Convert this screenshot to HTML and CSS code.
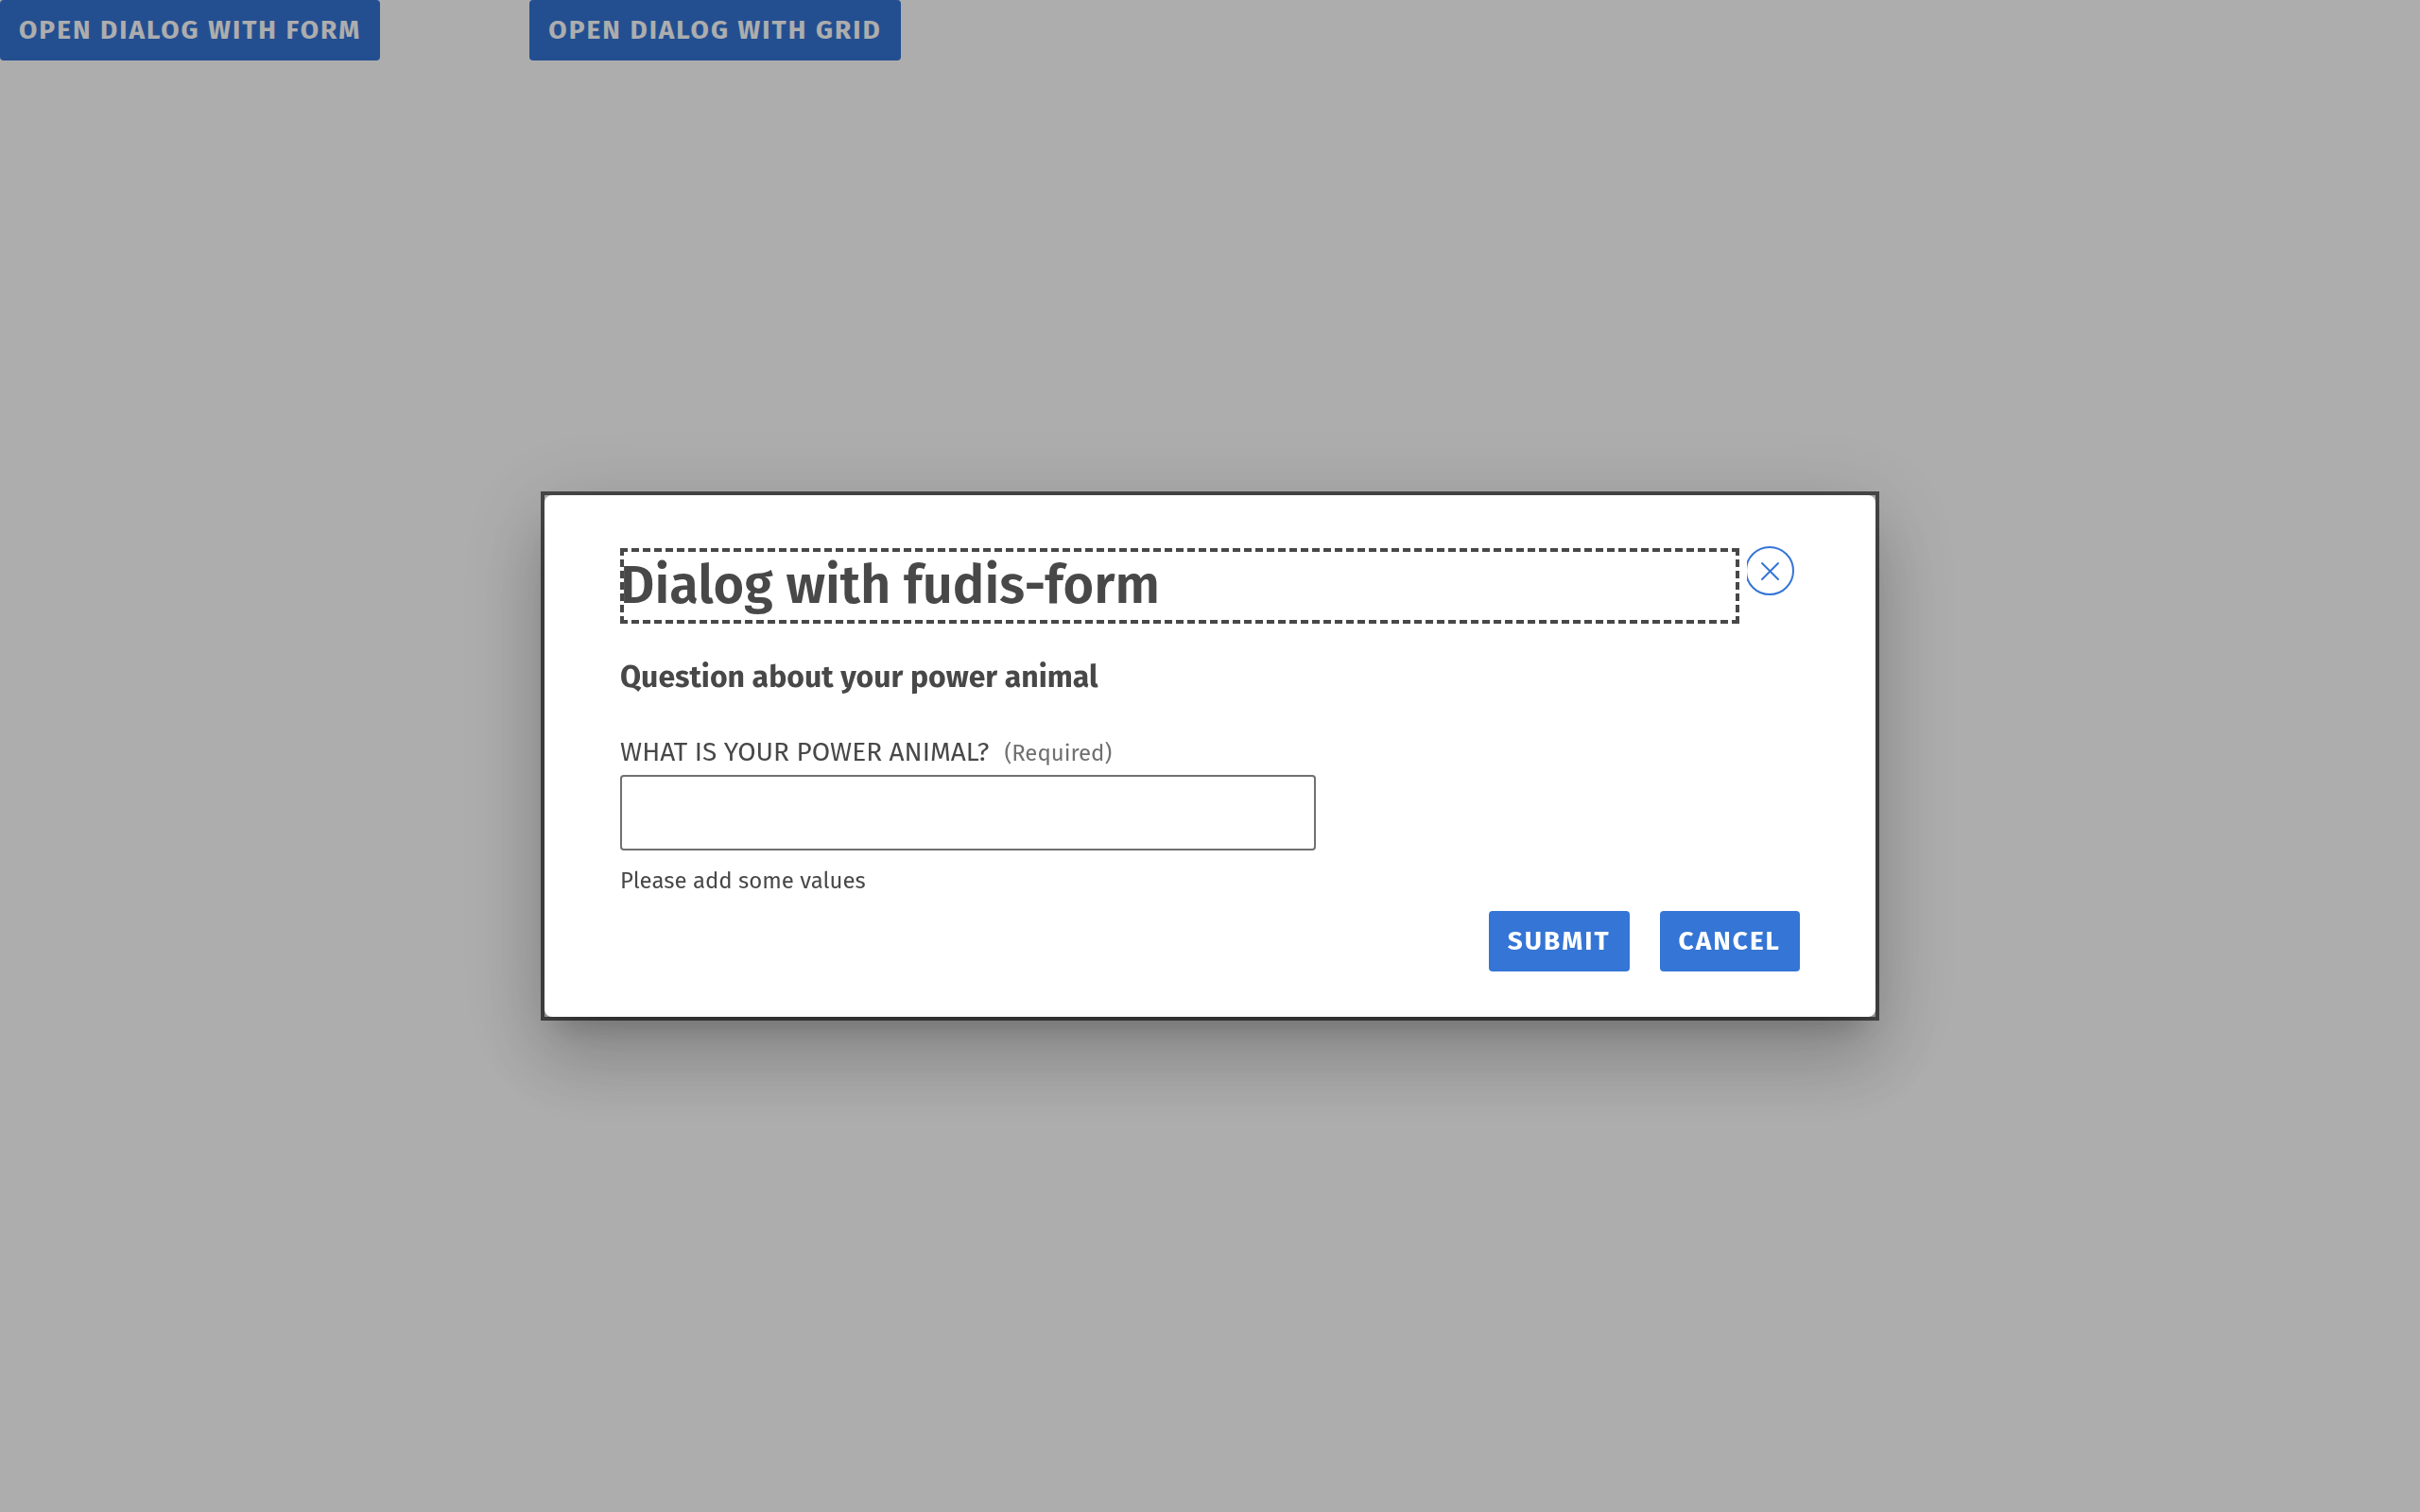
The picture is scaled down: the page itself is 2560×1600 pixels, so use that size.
FILE: index.html
```html
<!DOCTYPE html>
<html lang="en">
<head>
<meta charset="utf-8">
<meta name="viewport" content="width=device-width, initial-scale=1">
<title>Dialog</title>
<link rel="stylesheet" href="styles.css">
</head>
<body>
<main class="page">
  <button class="button" type="button">Open dialog with form</button>
  <button class="button" type="button">Open dialog with grid</button>
</main>
<div class="overlay">
  <div class="dialog-frame" role="dialog" aria-modal="true" aria-labelledby="dialog-title">
    <div class="dialog">
      <header class="dialog-header">
        <h1 class="dialog-title" id="dialog-title" tabindex="-1">Dialog with fudis-form</h1>
        <button class="close" type="button" aria-label="Close">
          <svg class="close-icon" viewBox="0 0 56 56" aria-hidden="true">
            <circle cx="24" cy="28" r="25"/>
            <path d="M16 20l17 17M33 20L16 37"/>
          </svg>
        </button>
      </header>
      <form class="form">
        <h2 class="form-title">Question about your power animal</h2>
        <div class="field">
          <label class="label" for="animal">WHAT IS YOUR POWER ANIMAL?<span class="required">(Required)</span></label>
          <input class="input" id="animal" type="text" required aria-describedby="animal-help">
          <p class="help" id="animal-help">Please add some values</p>
        </div>
        <div class="actions">
          <button class="button" type="submit">Submit</button>
          <button class="button" type="button">Cancel</button>
        </div>
      </form>
    </div>
  </div>
</div>
</body>
</html>
```
FILE: styles.css
```css
* {
  box-sizing: border-box;
}

body {
  margin: 0;
  background: #fff;
  color: #484848;
  font-family: "Fira Sans", "Noto Sans", sans-serif;
}

h1, h2, p {
  margin: 0;
}

.page {
  display: flex;
  gap: 158px;
}

.button {
  padding: 12px 20px;
  border: 0;
  border-radius: 4px;
  background: #3475d6;
  color: #fff;
  font: inherit;
  font-size: 28px;
  font-weight: 700;
  line-height: 40px;
  letter-spacing: 2px;
  text-transform: uppercase;
  white-space: nowrap;
}

.overlay {
  position: fixed;
  inset: 0;
  display: flex;
  align-items: center;
  justify-content: center;
  background: rgba(0, 0, 0, 0.32);
}

.dialog-frame {
  width: 100%;
  max-width: 1416px;
  border: 4px solid #484848;
}

.dialog {
  padding: 52px 80px 48px;
  border-radius: 8px;
  background: #fff;
  box-shadow:
    0 22px 30px -14px rgba(0, 0, 0, 0.2),
    0 48px 76px 6px rgba(0, 0, 0, 0.14),
    0 18px 92px 16px rgba(0, 0, 0, 0.12);
}

.dialog-header {
  display: flex;
  align-items: flex-start;
  gap: 8px;
}

.dialog-title {
  flex: 1;
  margin-top: 4px;
  outline: 4px dashed #484848;
  outline-offset: -4px;
  font-size: 56px;
  font-weight: 600;
  line-height: 80px;
}

.close {
  width: 56px;
  height: 56px;
  padding: 0;
  border: 0;
  background: none;
}

.close-icon {
  display: block;
  overflow: hidden;
  fill: none;
  stroke: #3475d6;
  stroke-width: 2;
  stroke-linecap: round;
}

.form {
  padding-top: 36px;
}

.form-title {
  font-size: 32px;
  font-weight: 700;
  line-height: 40px;
}

.field {
  padding-top: 40px;
}

.label {
  display: flex;
  align-items: baseline;
  gap: 16px;
  font-size: 28px;
  line-height: 40px;
}

.required {
  color: #707070;
  font-size: 24px;
  line-height: 32px;
}

.input {
  display: block;
  width: 100%;
  max-width: 736px;
  height: 80px;
  margin-top: 4px;
  padding: 0 16px;
  border: 2px solid #707070;
  border-radius: 4px;
  background: #fff;
  color: inherit;
  font: inherit;
  font-size: 28px;
}

.help {
  padding-top: 16px;
  font-size: 24px;
  line-height: 32px;
}

.actions {
  display: flex;
  justify-content: flex-end;
  gap: 32px;
  padding-top: 16px;
}
```
